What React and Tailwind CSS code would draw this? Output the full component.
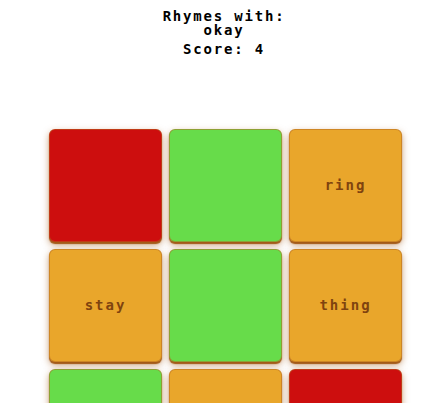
const TILES = [
  { color: 'red' },
  { color: 'green' },
  { color: 'orange', word: 'ring' },
  { color: 'orange', word: 'stay' },
  { color: 'green' },
  { color: 'orange', word: 'thing' },
  { color: 'green' },
  { color: 'orange' },
  { color: 'red' },
];

const COLORS = {
  red: 'bg-[#cd0e0e]',
  green: 'bg-[#67dc4a]',
  orange: 'bg-[#e9a62b]',
};

const FONT = { fontFamily: '"DejaVu Sans Mono", "Liberation Mono", monospace' };

export default function App() {
  return (
    <div className="w-[438px] h-[403px] overflow-hidden bg-white" style={FONT}>
      <div className="pt-[9px] pl-[10px] flex flex-col items-center text-black font-bold text-[14px] tracking-[1.8px]">
        <h1 className="leading-[14px] text-center text-[14px]">
          Rhymes with:<br />okay
        </h1>
        <p className="mt-[5px] leading-[14px]">Score: 4</p>
      </div>

      <div className="mt-[73px] pl-[49px] grid grid-cols-[repeat(3,113px)] gap-[7px]">
        {TILES.map((t, i) => (
          <div
            key={i}
            className={`h-[113px] rounded-[6px] border border-[#b4651d]/50 ${COLORS[t.color]} shadow-[0_2px_1px_#a35a18,0_3px_7px_rgba(160,85,20,0.55)] flex items-center justify-center`}
          >
            {t.word && (
              <span className="text-[14px] font-bold tracking-[2px] text-[#7f430f]">{t.word}</span>
            )}
          </div>
        ))}
      </div>
    </div>
  );
}
